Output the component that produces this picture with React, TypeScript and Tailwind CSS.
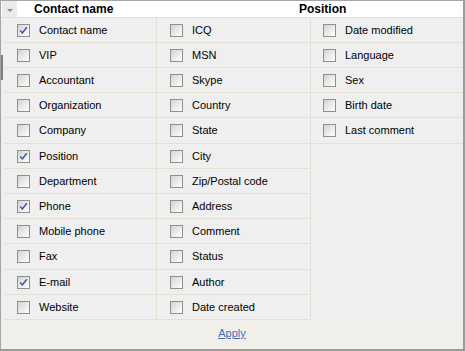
import React from "react";

const columns: { label: string; checked?: boolean }[][] = [
  [
    { label: "Contact name", checked: true },
    { label: "VIP" },
    { label: "Accountant" },
    { label: "Organization" },
    { label: "Company" },
    { label: "Position", checked: true },
    { label: "Department" },
    { label: "Phone", checked: true },
    { label: "Mobile phone" },
    { label: "Fax" },
    { label: "E-mail", checked: true },
    { label: "Website" },
  ],
  [
    { label: "ICQ" },
    { label: "MSN" },
    { label: "Skype" },
    { label: "Country" },
    { label: "State" },
    { label: "City" },
    { label: "Zip/Postal code" },
    { label: "Address" },
    { label: "Comment" },
    { label: "Status" },
    { label: "Author" },
    { label: "Date created" },
  ],
  [
    { label: "Date modified" },
    { label: "Language" },
    { label: "Sex" },
    { label: "Birth date" },
    { label: "Last comment" },
  ],
];

function Check({ checked }: { checked?: boolean }) {
  return (
    <span className="w-[13px] h-[13px] shrink-0 border border-[#8e8f8f] bg-gradient-to-br from-[#d4d4ce] to-white flex items-center justify-center">
      {checked && (
        <svg width="9" height="9" viewBox="0 0 9 9">
          <path d="M1.2 4.4 L3.4 6.9 L7.8 1.2" fill="none" stroke="#3b53b0" strokeWidth="1.5" />
        </svg>
      )}
    </span>
  );
}

export default function App() {
  return (
    <div className="relative w-[465px] h-[351px] flex flex-col bg-[#efefef] border-l border-t border-[#a5a5a5] border-r-2 border-b-2 border-r-[#9b9b9b] border-b-[#9b9b9b] font-['Liberation_Sans',Arial,sans-serif] text-black overflow-hidden">
      {/* header */}
      <div className="flex items-center h-[17px] bg-white border-b border-[#e3dfd1] shrink-0">
        <div className="w-[15px] h-[16px] ml-px bg-[#ebebeb] flex items-center justify-center">
          <svg width="6" height="4" viewBox="0 0 6 4" className="mt-[3px]">
            <path d="M0 0 H6 L3 3 Z" fill="#8a8a8a" />
          </svg>
        </div>
        <div className="w-[282px] pl-[17px] text-[12px] font-bold leading-none">Contact name</div>
        <div className="text-[12px] font-bold leading-none">Position</div>
      </div>

      {/* columns */}
      <div className="flex pl-[3px] shrink-0 h-[302px]">
        {columns.map((col, ci) => (
          <div
            key={ci}
            className={
              ci === 0
                ? "w-[153px] border-r border-[#e3dfd1]"
                : ci === 1
                ? "w-[154px] border-r border-[#e3dfd1]"
                : "flex-1"
            }
          >
            {col.map((item, ri) => (
              <div
                key={item.label}
                className={
                  "flex items-center gap-[9px] border-b border-[#e3dfd1] text-[11px] " +
                  (ri === 4 || ri === 9 ? "h-[26px] " : "h-[25px] ") +
                  (ci === 2 ? "pl-[12px]" : "pl-[13px]")
                }
              >
                <Check checked={item.checked} />
                <span>{item.label}</span>
              </div>
            ))}
          </div>
        ))}
      </div>

      {/* footer */}
      <div className="flex-1 bg-[#f1efe9] flex items-center justify-center pb-[2px]">
        <a href="#" className="text-[11px] text-[#3c70b5] underline">
          Apply
        </a>
      </div>

      {/* scroll thumb at left edge */}
      <div className="absolute left-0 top-[54px] w-[2px] h-[25px] bg-[#7d7d7d]" />
    </div>
  );
}
